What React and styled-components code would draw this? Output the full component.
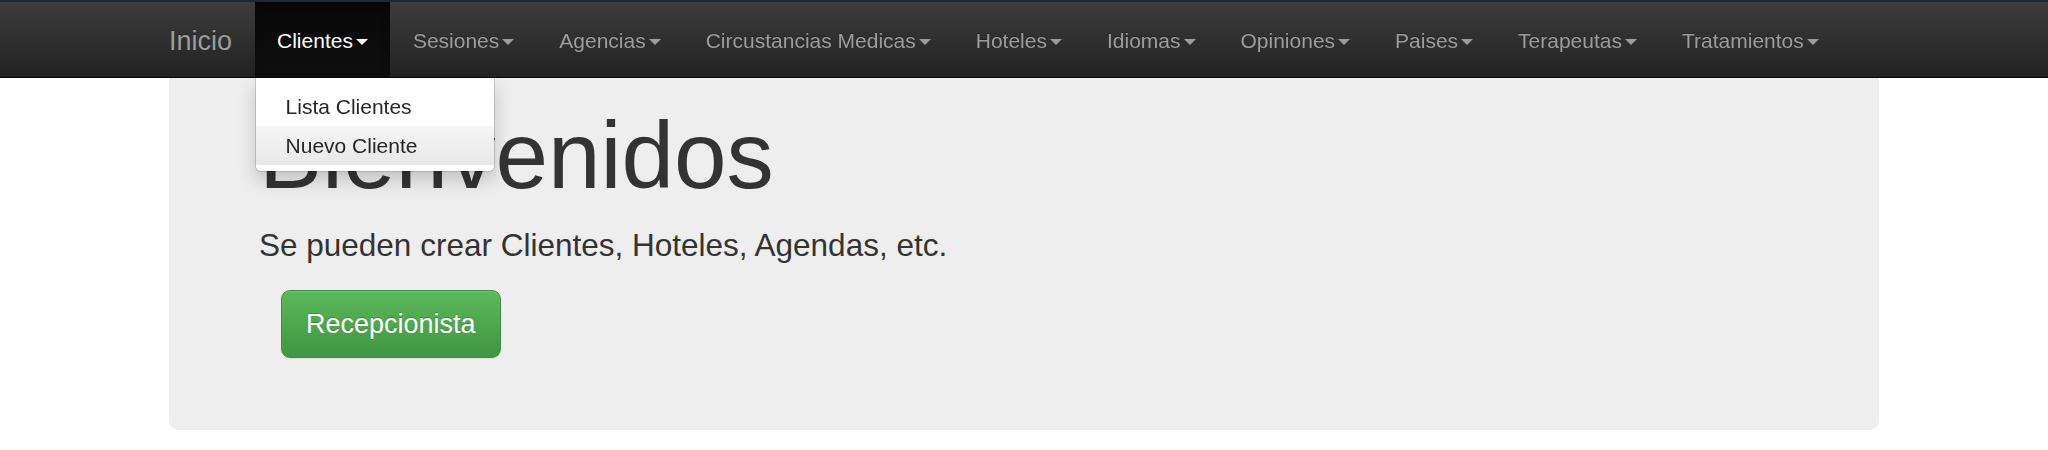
import React from "react";
import styled, { createGlobalStyle } from "styled-components";

const Global = createGlobalStyle`
  html, body { margin: 0; padding: 0; background: #fff; }
  body {
    font-family: "Liberation Sans", Arial, Helvetica, sans-serif;
    font-size: 21px;
    line-height: 1.42857;
    color: #333;
  }
  * { box-sizing: border-box; }
`;

const Navbar = styled.nav`
  position: fixed;
  top: 0;
  left: 0;
  right: 0;
  z-index: 10;
  height: 78px;
  border-top: 2px solid #1f2733;
  border-bottom: 1px solid #080808;
  background-image: linear-gradient(to bottom, #3c3c3c 0, #222 100%);
`;

const NavContainer = styled.div`
  width: 1755px;
  margin: 0 auto;
  padding: 0 22.5px;
  display: flex;
  align-items: stretch;
  height: 75px;
`;

const Brand = styled.a`
  margin-left: -22.5px;
  padding: 23.5px 22.5px 21.5px;
  font-size: 27px;
  line-height: 30px;
  color: #9d9d9d;
  text-decoration: none;
  text-shadow: 0 -1px 0 rgba(0, 0, 0, 0.25);
`;

const NavList = styled.ul`
  list-style: none;
  margin: 0;
  padding: 0;
  display: flex;
`;

const NavItem = styled.li`
  position: relative;
  ${(p) =>
    p.$active &&
    `
    background-image: linear-gradient(to bottom, #080808 0, #0f0f0f 100%);
    box-shadow: inset 0 3px 9px rgba(0, 0, 0, 0.25);
  `}
`;

const NavLink = styled.a`
  display: block;
  padding: 23.5px 22.5px 21.5px;
  line-height: 30px;
  font-size: 21px;
  color: ${(p) => (p.$active ? "#fff" : "#9d9d9d")};
  text-decoration: none;
  text-shadow: 0 -1px 0 rgba(0, 0, 0, 0.25);
  white-space: nowrap;
`;

const Caret = styled.span`
  display: inline-block;
  width: 0;
  height: 0;
  margin-left: 3px;
  vertical-align: middle;
  border-top: 6px solid;
  border-right: 6px solid transparent;
  border-left: 6px solid transparent;
`;

const Dropdown = styled.ul`
  position: absolute;
  top: 100%;
  left: 0;
  margin: 1px 0 0;
  padding: 9px 0 6px;
  list-style: none;
  min-width: 240px;
  width: 239px;
  background: #fff;
  border: 1px solid rgba(0, 0, 0, 0.15);
  border-top: 0;
  border-radius: 0 0 6px 6px;
  box-shadow: 0 9px 18px rgba(0, 0, 0, 0.175);
  background-clip: padding-box;
`;

const DropLink = styled.a`
  display: block;
  padding: 4.5px 30px;
  line-height: 30px;
  font-size: 21px;
  color: #262626;
  text-decoration: none;
  white-space: nowrap;
  background-image: ${(p) =>
    p.$hover ? "linear-gradient(to bottom, #f5f5f5 0, #e8e8e8 100%)" : "none"};
`;

const Page = styled.div`
  padding-top: 2px;
`;

const Container = styled.div`
  width: 1755px;
  margin: 0 auto;
  padding: 0 22.5px;
`;

const Jumbotron = styled.div`
  background: #eee;
  border-radius: 9px;
  padding: 72px 90px;
  margin-bottom: 45px;
`;

const Title = styled.h1`
  margin: 30px 0 15px;
  font-size: 94.5px;
  line-height: 1.1;
  font-weight: 500;
  color: #333;
`;

const Lead = styled.p`
  margin: 0 0 22.5px;
  font-size: 31.5px;
  line-height: 45px;
  font-weight: 200;
`;

const ButtonRow = styled.p`
  margin: 0;
  padding-left: 22px;
  line-height: 0;
`;

const SuccessButton = styled.a`
  display: inline-block;
  padding: 15px 24px;
  font-size: 27px;
  line-height: 36px;
  color: #fff;
  text-decoration: none;
  border: 1.5px solid #3e8f3e;
  border-radius: 9px;
  background-image: linear-gradient(to bottom, #5cb85c 0, #419641 100%);
  text-shadow: 0 -1px 0 rgba(0, 0, 0, 0.2);
  box-shadow: inset 0 1px 0 rgba(255, 255, 255, 0.15), 0 1px 1px rgba(0, 0, 0, 0.075);
`;

const menus = [
  "Sesiones",
  "Agencias",
  "Circustancias Medicas",
  "Hoteles",
  "Idiomas",
  "Opiniones",
  "Paises",
  "Terapeutas",
  "Tratamientos",
];

export default function App() {
  return (
    <>
      <Global />
      <Navbar>
        <NavContainer>
          <Brand href="#">Inicio</Brand>
          <NavList>
            <NavItem $active>
              <NavLink href="#" $active>
                Clientes<Caret />
              </NavLink>
              <Dropdown>
                <li>
                  <DropLink href="#">Lista Clientes</DropLink>
                </li>
                <li>
                  <DropLink href="#" $hover>
                    Nuevo Cliente
                  </DropLink>
                </li>
              </Dropdown>
            </NavItem>
            {menus.map((m) => (
              <NavItem key={m}>
                <NavLink href="#">
                  {m}
                  <Caret />
                </NavLink>
              </NavItem>
            ))}
          </NavList>
        </NavContainer>
      </Navbar>
      <Page>
        <Container>
          <Jumbotron>
            <Title>Bienvenidos</Title>
            <Lead>Se pueden crear Clientes, Hoteles, Agendas, etc.</Lead>
            <ButtonRow>
              <SuccessButton href="#">Recepcionista</SuccessButton>
            </ButtonRow>
          </Jumbotron>
        </Container>
      </Page>
    </>
  );
}
